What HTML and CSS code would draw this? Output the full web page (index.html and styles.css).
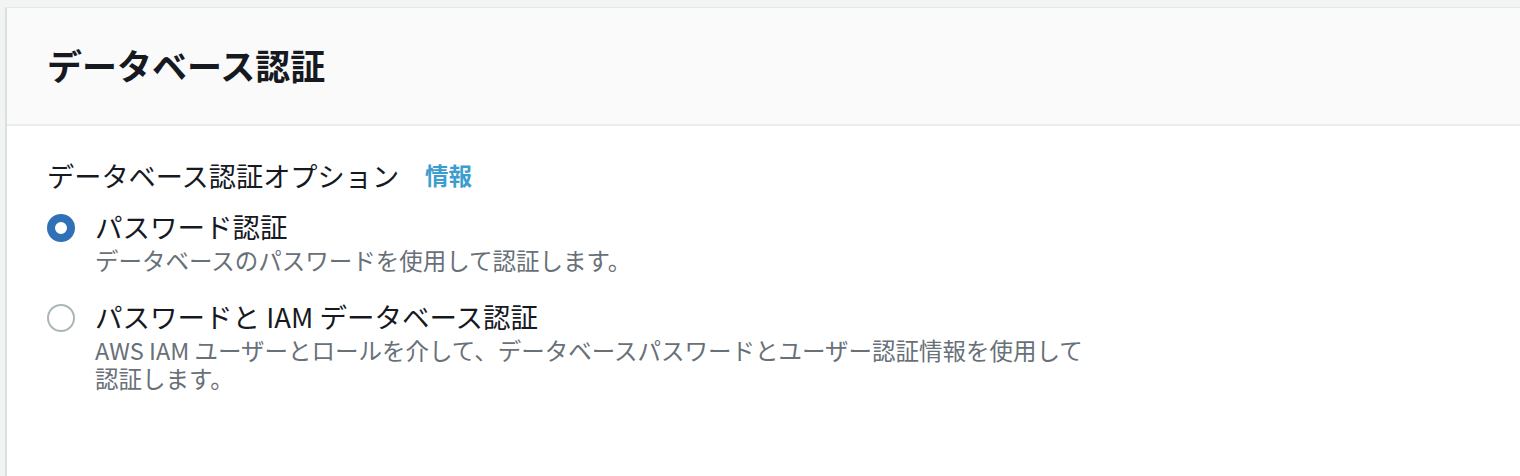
FILE: index.html
```html
<!DOCTYPE html>
<html lang="ja">
    <head>
        <title>データベース認証</title>
        <meta charset="UTF-8">
        <link rel="stylesheet" href="styles.css">
    </head>
    <body>
        <div class="card">
            <div class="card-header">
                <h2>データベース認証</h2>
            </div>
            <div class="card-body">
                <div class="label-row">
                    <span class="label">データベース認証オプション</span>
                    <a class="info" href="#">情報</a>
                </div>
                <div class="radio-group">
                    <label class="radio">
                        <span class="radio-dot checked"></span>
                        <span class="radio-text">
                            <span class="radio-title">パスワード認証</span>
                            <span class="radio-desc">データベースのパスワードを使用して認証します。</span>
                        </span>
                    </label>
                    <label class="radio">
                        <span class="radio-dot"></span>
                        <span class="radio-text">
                            <span class="radio-title">パスワードと IAM データベース認証</span>
                            <span class="radio-desc">AWS IAM ユーザーとロールを介して、データベースパスワードとユーザー認証情報を使用して認証します。</span>
                        </span>
                    </label>
                </div>
            </div>
        </div>
    </body>
</html>
```

FILE: styles.css
```css
* {
    margin: 0;
    padding: 0;
    box-sizing: border-box;
    font-family: "Noto Sans CJK JP", "Noto Sans", sans-serif;
}
body {
    background-color: #f2f3f3;
    padding-top: 7px;
    padding-left: 5px;
    height: 476px;
    overflow: hidden;
}
.card {
    background-color: #ffffff;
    border-top: 1px solid #e6e8e8;
    border-left: 2px solid #dcdfdf;
    width: 1515px;
    height: 470px;
}
.card-header {
    background-color: #fafafa;
    border-bottom: 2px solid #eaeded;
    height: 118px;
    padding-left: 40px;
    display: flex;
    align-items: center;
}
.card-header h2 {
    font-size: 35px;
    font-weight: bold;
    color: #16191f;
    margin-top: -4px;
}
.card-body {
    padding: 29px 0 0 40px;
}
.label-row {
    display: flex;
    align-items: center;
    gap: 26px;
    height: 40px;
}
.label {
    font-size: 27.2px;
    color: #16191f;
}
.info {
    font-size: 23.5px;
    font-weight: bold;
    color: #3c9dd0;
    text-decoration: none;
}
.radio-group {
    display: flex;
    flex-direction: column;
    gap: 22px;
    margin-top: 11px;
}
.radio {
    display: flex;
    align-items: flex-start;
    gap: 20px;
}
.radio-dot {
    width: 28px;
    height: 28px;
    border-radius: 50%;
    border: 2px solid #aab7b8;
    margin-top: 8px;
    flex-shrink: 0;
}
.radio-dot.checked {
    border: 8px solid #2f70b7;
}
.radio-text {
    display: flex;
    flex-direction: column;
    max-width: 1000px;
}
.radio-title {
    font-size: 27.5px;
    color: #16191f;
    line-height: 40px;
}
.radio-desc {
    font-size: 23.5px;
    color: #687078;
    line-height: 28px;
}
```
